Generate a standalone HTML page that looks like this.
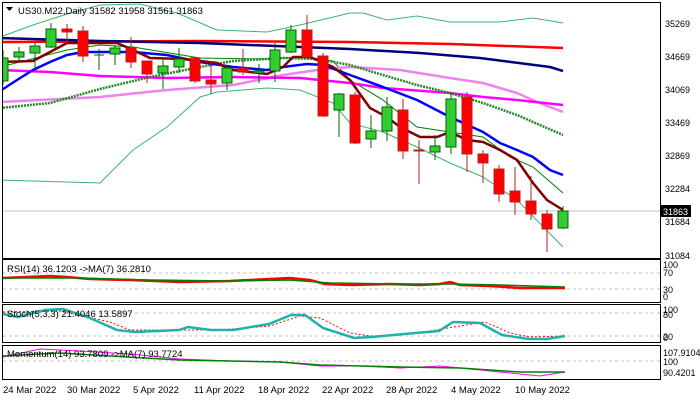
<!DOCTYPE html>
<html><head><meta charset="utf-8"><style>
html,body{margin:0;padding:0;background:#fff;width:700px;height:400px;overflow:hidden}
svg{display:block}
text{font-family:"Liberation Sans",sans-serif;font-size:9.5px;fill:#000}
.ax text{font-size:9px}
</style></head><body>
<svg width="700" height="400" viewBox="0 0 700 400" xmlns="http://www.w3.org/2000/svg">
<rect width="700" height="400" fill="#fff"/>
<defs><clipPath id="m"><rect x="3" y="3" width="657" height="255"/></clipPath></defs>
<g clip-path="url(#m)" fill="none">
<line x1="3" y1="211" x2="660" y2="211" stroke="#c0c0c0"/>
<polyline stroke="#3cb371" points="0,37 33,25 67,14 100,5 140,4 177,13 217,30 267,32 300,25 350,13 363,13 387,20 417,16 450,22 500,22 533,18 563,23"/>
<polyline stroke="#3cb371" points="0,180 100,183 133,150 167,127 200,97 217,92 267,88 300,90 333,103 350,123 383,132 417,147 450,163 483,177 517,200 563,247"/>
<polyline stroke="#008000" points="0,67 67,50 100,45 133,47 200,58 267,59 300,57 333,61 350,80 383,100 417,127 450,132 483,137 510,157 533,167 563,193"/>
<polyline stroke="#ff0000" stroke-width="2.5" points="0,42 200,41 350,42 450,44 563,48"/>
<polyline stroke="#000080" stroke-width="2.5" points="0,38 100,41 200,43 350,49 420,53 480,58 550,67 563,71"/>
<polyline stroke="#ee82ee" stroke-width="2.5" points="0,102 100,97 167,90 233,85 283,75 317,70 350,67 400,70 450,78 483,83 517,93 537,102 563,112"/>
<polyline stroke="#ff00ff" stroke-width="2.5" points="0,70 50,72 100,76 167,78 233,77 300,78 350,83 383,88 450,93 483,97 517,100 563,105"/>
<polyline stroke="#228b22" stroke-width="2.5" stroke-dasharray="2,1" points="0,108 50,103 100,89 150,77 200,67 233,61 283,58 317,59 350,65 383,75 417,85 450,93 483,103 517,115 563,135"/>
<polyline stroke="#0000ff" stroke-width="2.5" points="0,91 17,80 33,70 50,62 67,55 83,52 133,52 167,55 200,62 233,67 267,70 283,67 307,64 323,65 350,75 383,87 417,100 450,117 483,132 500,143 517,150 533,157 550,170 563,175"/>
<polyline stroke="#800000" stroke-width="2.5" points="0,62 33,61 50,52 67,43 100,43 117,43 133,50 150,58 183,59 217,63 233,70 267,74 283,67 293,57 310,57 333,67 350,80 370,108 387,117 400,127 420,137 437,137 450,132 467,140 483,142 500,150 517,160 533,183 547,200 563,210"/>
</g>
<g clip-path="url(#m)">
<g stroke="#006400" fill="#32cd32">
<line x1="3" y1="50" x2="3" y2="85"/><rect x="-2" y="58" width="10" height="23"/>
<line x1="19" y1="47" x2="19" y2="63"/><rect x="14" y="52" width="10" height="5"/>
<line x1="35" y1="43" x2="35" y2="69"/><rect x="30" y="46" width="10" height="7"/>
<line x1="51" y1="23" x2="51" y2="48"/><rect x="46" y="29" width="10" height="18"/>
<line x1="99" y1="49" x2="99" y2="70"/><line x1="94" y1="55" x2="104" y2="55"/>
<line x1="115" y1="45" x2="115" y2="65"/><rect x="110" y="48" width="10" height="6"/>
<line x1="163" y1="60" x2="163" y2="89"/><rect x="158" y="66" width="10" height="7"/>
<line x1="179" y1="48" x2="179" y2="73"/><rect x="174" y="59" width="10" height="8"/>
<line x1="227" y1="67" x2="227" y2="90"/><rect x="222" y="68" width="10" height="15"/>
<line x1="259" y1="64" x2="259" y2="83"/><rect x="254" y="71" width="10" height="2"/>
<line x1="275" y1="43" x2="275" y2="82"/><rect x="270" y="50" width="10" height="21"/>
<line x1="291" y1="25" x2="291" y2="53"/><rect x="286" y="30" width="10" height="22"/>
<line x1="339" y1="93" x2="339" y2="137"/><rect x="334" y="94" width="10" height="16"/>
<line x1="371" y1="115" x2="371" y2="148"/><rect x="366" y="131" width="10" height="8"/>
<line x1="387" y1="97" x2="387" y2="141"/><rect x="382" y="107" width="10" height="24"/>
<line x1="435" y1="135" x2="435" y2="160"/><rect x="430" y="146" width="10" height="6"/>
<line x1="451" y1="92" x2="451" y2="154"/><rect x="446" y="99" width="10" height="48"/>
<line x1="563" y1="206" x2="563" y2="229"/><rect x="558" y="211" width="10" height="17"/>
</g>
<g stroke="#b22222" fill="#ff0000">
<line x1="67" y1="24" x2="67" y2="43"/><rect x="62" y="29" width="10" height="3"/>
<line x1="83" y1="26" x2="83" y2="62"/><rect x="78" y="31" width="10" height="25"/>
<line x1="131" y1="37" x2="131" y2="68"/><rect x="126" y="48" width="10" height="14"/>
<line x1="147" y1="61" x2="147" y2="83"/><rect x="142" y="61" width="10" height="13"/>
<line x1="195" y1="58" x2="195" y2="83"/><rect x="190" y="58" width="10" height="23"/>
<line x1="211" y1="61" x2="211" y2="94"/><rect x="206" y="80" width="10" height="4"/>
<line x1="243" y1="49" x2="243" y2="75"/><rect x="238" y="68" width="10" height="4"/>
<line x1="307" y1="15" x2="307" y2="57"/><rect x="302" y="30" width="10" height="27"/>
<line x1="323" y1="53" x2="323" y2="117"/><rect x="318" y="56" width="10" height="60"/>
<line x1="355" y1="92" x2="355" y2="144"/><rect x="350" y="95" width="10" height="48"/>
<line x1="403" y1="99" x2="403" y2="159"/><rect x="398" y="110" width="10" height="41"/>
<line x1="419" y1="140" x2="419" y2="184"/><rect x="414" y="150" width="10" height="1"/>
<line x1="467" y1="92" x2="467" y2="172"/><rect x="462" y="97" width="10" height="57"/>
<line x1="483" y1="150" x2="483" y2="183"/><rect x="478" y="154" width="10" height="9"/>
<line x1="499" y1="165" x2="499" y2="202"/><rect x="494" y="169" width="10" height="25"/>
<line x1="515" y1="167" x2="515" y2="215"/><rect x="510" y="191" width="10" height="11"/>
<line x1="531" y1="176" x2="531" y2="220"/><rect x="526" y="201" width="10" height="13"/>
<line x1="547" y1="210" x2="547" y2="252"/><rect x="542" y="214" width="10" height="15"/>
</g>
</g>
<rect x="2.5" y="2.5" width="658" height="256" fill="none" stroke="#000"/>
<path d="M6 7h7l-3.5 4z" fill="#000"/>
<text x="18" y="14">US30.M22,Daily  31582 31958 31561 31863</text>
<g class="ax">
<text x="665" y="27">35269</text><text x="665" y="60">34669</text><text x="665" y="93">34069</text><text x="665" y="126">33469</text><text x="665" y="159">32869</text><text x="665" y="192">32284</text><text x="665" y="225">31684</text><text x="665" y="259">31084</text>
<rect x="661" y="205" width="30" height="12" fill="#000"/><text x="663" y="215" style="fill:#fff">31863</text>
<text x="663" y="268">100</text><text x="663" y="276">70</text><text x="663" y="293">30</text><text x="663" y="300">0</text>
<text x="663" y="313">100</text><text x="663" y="318">80</text><text x="663" y="340">20</text><text x="663" y="341">0</text>
<text x="663" y="356">107.9104</text><text x="663" y="365">100</text><text x="663" y="376">90.4201</text>
</g>
<rect x="2.5" y="259.5" width="658" height="43" fill="none" stroke="#000"/>
<g stroke="#c0c0c0" stroke-dasharray="3,3"><line x1="3" y1="273" x2="660" y2="273"/><line x1="3" y1="289" x2="660" y2="289"/><line x1="3" y1="313" x2="660" y2="313"/><line x1="3" y1="336" x2="660" y2="336"/><line x1="3" y1="361" x2="660" y2="361"/></g>
<polyline fill="none" stroke="#ff0000" stroke-width="2.5" points="3,278 50,276 67,277 90,279 130,280 180,282 230,281 270,279 290,278 310,280 325,284 350,285 390,284 420,285 440,284 450,282 460,285 490,286 520,288 565,288"/>
<polyline fill="none" stroke="#008000" stroke-width="1.5" points="3,278 80,278 150,280 230,281 290,280 330,283 400,284 450,284 500,285 565,287"/>
<text x="7" y="272">RSI(14) 36.1203  -&gt;MA(7) 36.2810</text>
<rect x="2.5" y="304.5" width="658" height="38" fill="none" stroke="#000"/>
<polyline fill="none" stroke="#ff0000" stroke-dasharray="2,2" points="3,312 60,311 110,322 130,330 170,330 220,330 270,326 300,316 320,318 350,333 370,336 400,335 430,331 460,326 485,322 510,333 530,337 565,336"/>
<polyline fill="none" stroke="#20b2aa" stroke-width="2.5" points="3,314 18,317 45,310 63,309 90,318 117,330 135,332 179,330 188,327 211,330 233,330 269,324 291,315 305,315 323,328 354,338 372,337 404,334 439,331 453,322 480,323 502,335 529,339 547,339 565,336"/>
<text x="7" y="317">Stoch(5,3,3) 21.4046 13.5897</text>
<rect x="2.5" y="345.5" width="658" height="34" fill="none" stroke="#000"/>
<polyline fill="none" stroke="#ff00ff" points="3,357 40,349 80,351 130,354 180,359 230,361 280,362 320,366 360,366 400,368 440,366 480,370 510,373 540,376 565,372"/>
<polyline fill="none" stroke="#008000" stroke-width="1.5" points="3,356 60,353 110,356 180,360 230,361 280,362 320,365 400,367 460,368 520,372 565,372"/>
<text x="7" y="357">Momentum(14) 93.7809  -&gt;MA(7) 93.7724</text>
<text x="3" y="393">24 Mar 2022</text><text x="67" y="393">30 Mar 2022</text><text x="133" y="393">5 Apr 2022</text><text x="194" y="393">11 Apr 2022</text><text x="258" y="393">18 Apr 2022</text><text x="322" y="393">22 Apr 2022</text><text x="386" y="393">28 Apr 2022</text><text x="451" y="393">4 May 2022</text><text x="515" y="393">10 May 2022</text>
</svg>
</body></html>
